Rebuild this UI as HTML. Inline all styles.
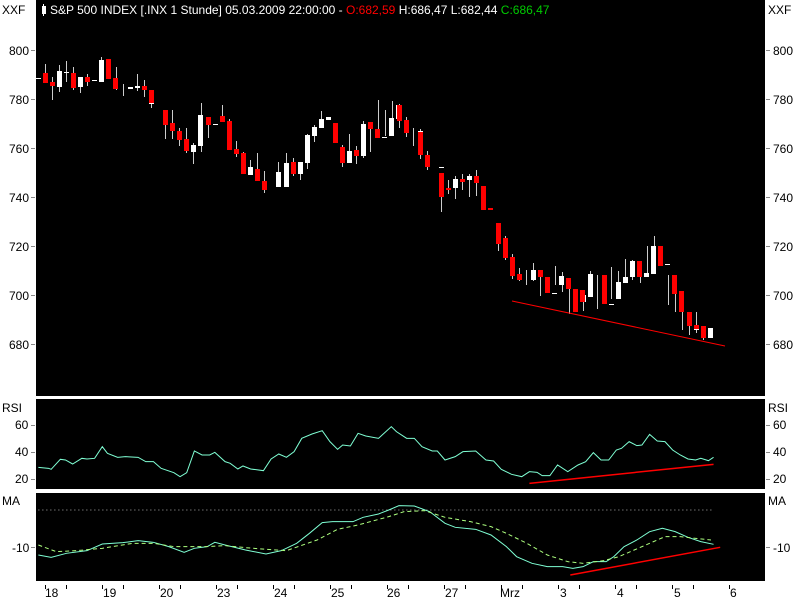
<!DOCTYPE html><html><head><style>
body{margin:0;background:#fff;width:800px;height:600px;overflow:hidden;font-family:"Liberation Sans",sans-serif}
svg{display:block}
text{font-family:"Liberation Sans",sans-serif;font-size:12px}
</style></head><body>
<svg width="800" height="600" xmlns="http://www.w3.org/2000/svg" shape-rendering="crispEdges">
<rect width="800" height="600" fill="#fff"/>
<rect x="36" y="0" width="729" height="396" fill="#000"/>
<rect x="36" y="399" width="729" height="90" fill="#000"/>
<rect x="36" y="493" width="729" height="88" fill="#000"/>
<g fill="#000">
<text x="2" y="14" font-size="11">XXF</text>
<text x="768" y="14" font-size="11">XXF</text>
<text x="9" y="55">800</text><text x="9" y="104">780</text><text x="9" y="153">760</text><text x="9" y="202">740</text><text x="9" y="251">720</text><text x="9" y="300">700</text><text x="9" y="349">680</text>
<text x="773" y="55">800</text><text x="773" y="104">780</text><text x="773" y="153">760</text><text x="773" y="202">740</text><text x="773" y="251">720</text><text x="773" y="300">700</text><text x="773" y="349">680</text>
<text x="2" y="412">RSI</text><text x="768" y="412">RSI</text>
<text x="15" y="429">60</text><text x="15" y="456">40</text><text x="15" y="483">20</text>
<text x="773" y="429">60</text><text x="773" y="456">40</text><text x="773" y="483">20</text>
<text x="2" y="505">MA</text><text x="768" y="505">MA</text>
<text x="12" y="552">-10</text><text x="773" y="552">-10</text>
<text x="45" y="597">18</text><text x="103" y="597">19</text><text x="160" y="597">20</text><text x="217" y="597">23</text><text x="274" y="597">24</text><text x="331" y="597">25</text><text x="387" y="597">26</text><text x="445" y="597">27</text><text x="500" y="597">Mrz</text><text x="560" y="597">3</text><text x="617" y="597">4</text><text x="674" y="597">5</text><text x="730" y="597">6</text>
</g>
<g fill="#888">
<rect x="31" y="50" width="4" height="1"/><rect x="31" y="99" width="4" height="1"/><rect x="31" y="148" width="4" height="1"/><rect x="31" y="197" width="4" height="1"/><rect x="31" y="246" width="4" height="1"/><rect x="31" y="295" width="4" height="1"/><rect x="31" y="344" width="4" height="1"/>
<rect x="766" y="50" width="4" height="1"/><rect x="766" y="99" width="4" height="1"/><rect x="766" y="148" width="4" height="1"/><rect x="766" y="197" width="4" height="1"/><rect x="766" y="246" width="4" height="1"/><rect x="766" y="295" width="4" height="1"/><rect x="766" y="344" width="4" height="1"/>
<rect x="31" y="425" width="4" height="1"/><rect x="31" y="452" width="4" height="1"/><rect x="31" y="479" width="4" height="1"/>
<rect x="766" y="425" width="4" height="1"/><rect x="766" y="452" width="4" height="1"/><rect x="766" y="479" width="4" height="1"/>
<rect x="31" y="547" width="4" height="1"/><rect x="766" y="547" width="4" height="1"/>
</g>
<g fill="#000">
<rect x="45" y="585" width="1" height="4"/><rect x="66" y="585" width="1" height="4"/><rect x="102" y="585" width="1" height="4"/><rect x="123" y="585" width="1" height="4"/><rect x="159" y="585" width="1" height="4"/><rect x="180" y="585" width="1" height="4"/><rect x="216" y="585" width="1" height="4"/><rect x="237" y="585" width="1" height="4"/><rect x="273" y="585" width="1" height="4"/><rect x="294" y="585" width="1" height="4"/><rect x="330" y="585" width="1" height="4"/><rect x="351" y="585" width="1" height="4"/><rect x="387" y="585" width="1" height="4"/><rect x="408" y="585" width="1" height="4"/><rect x="444" y="585" width="1" height="4"/><rect x="465" y="585" width="1" height="4"/><rect x="501" y="585" width="1" height="4"/><rect x="522" y="585" width="1" height="4"/><rect x="558" y="585" width="1" height="4"/><rect x="579" y="585" width="1" height="4"/><rect x="615" y="585" width="1" height="4"/><rect x="636" y="585" width="1" height="4"/><rect x="672" y="585" width="1" height="4"/><rect x="693" y="585" width="1" height="4"/><rect x="729" y="585" width="1" height="4"/>
</g>
<rect x="42" y="6" width="4" height="8" fill="#fff"/><rect x="43" y="4" width="1" height="12" fill="#fff"/>
<text x="50" y="14" font-size="11" fill="#fff">S&amp;P 500 INDEX [.INX  1 Stunde] 05.03.2009 22:00:00 - <tspan fill="#f00">O:682,59</tspan> H:686,47 L:682,44 <tspan fill="#0c0">C:686,47</tspan></text>
<g id="c">
<!-- wicks -->
<g fill="#ccc">
<rect x="45" y="64" width="1" height="19"/><rect x="52" y="77" width="1" height="23"/><rect x="59" y="65" width="1" height="27"/><rect x="66" y="61" width="1" height="21"/><rect x="73" y="67" width="1" height="23"/><rect x="80" y="77" width="1" height="16"/><rect x="87" y="74" width="1" height="12"/><rect x="101" y="57" width="1" height="25"/>
<rect x="116" y="67" width="1" height="23"/><rect x="123" y="84" width="1" height="12"/><rect x="137" y="74" width="1" height="17"/><rect x="144" y="80" width="1" height="17"/><rect x="151" y="90" width="1" height="18"/>
<rect x="165" y="110" width="1" height="29"/><rect x="172" y="110" width="1" height="29"/><rect x="179" y="128" width="1" height="18"/><rect x="186" y="128" width="1" height="25"/><rect x="193" y="143" width="1" height="21"/><rect x="201" y="103" width="1" height="49"/><rect x="208" y="117" width="1" height="21"/><rect x="222" y="105" width="1" height="17"/><rect x="229" y="119" width="1" height="31"/><rect x="236" y="141" width="1" height="16"/><rect x="243" y="152" width="1" height="22"/><rect x="250" y="160" width="1" height="15"/><rect x="257" y="153" width="1" height="28"/><rect x="264" y="171" width="1" height="22"/>
<rect x="278" y="162" width="1" height="25"/><rect x="286" y="153" width="1" height="34"/><rect x="293" y="158" width="1" height="18"/><rect x="300" y="162" width="1" height="18"/><rect x="307" y="134" width="1" height="35"/><rect x="314" y="125" width="1" height="17"/><rect x="321" y="111" width="1" height="17"/><rect x="335" y="123" width="1" height="20"/><rect x="342" y="145" width="1" height="22"/><rect x="349" y="134" width="1" height="29"/><rect x="356" y="146" width="1" height="18"/><rect x="363" y="121" width="1" height="37"/><rect x="370" y="122" width="1" height="30"/><rect x="378" y="100" width="1" height="38"/><rect x="385" y="110" width="1" height="26"/><rect x="392" y="101" width="1" height="22"/><rect x="399" y="104" width="1" height="24"/><rect x="406" y="117" width="1" height="20"/><rect x="413" y="128" width="1" height="18"/><rect x="420" y="129" width="1" height="30"/><rect x="427" y="151" width="1" height="19"/>
<rect x="441" y="173" width="1" height="39"/><rect x="448" y="180" width="1" height="14"/><rect x="455" y="176" width="1" height="23"/><rect x="462" y="174" width="1" height="16"/><rect x="469" y="174" width="1" height="23"/><rect x="476" y="170" width="1" height="26"/><rect x="484" y="186" width="1" height="24"/>
<rect x="498" y="223" width="1" height="28"/><rect x="505" y="236" width="1" height="24"/><rect x="512" y="254" width="1" height="25"/><rect x="519" y="268" width="1" height="13"/><rect x="526" y="270" width="1" height="15"/><rect x="533" y="263" width="1" height="18"/><rect x="540" y="277" width="1" height="19"/><rect x="555" y="266" width="1" height="19"/><rect x="562" y="272" width="1" height="20"/><rect x="569" y="286" width="1" height="28"/><rect x="583" y="293" width="1" height="18"/><rect x="590" y="271" width="1" height="26"/><rect x="597" y="275" width="1" height="34"/><rect x="611" y="267" width="1" height="32"/><rect x="618" y="271" width="1" height="25"/><rect x="625" y="259" width="1" height="18"/><rect x="632" y="260" width="1" height="20"/><rect x="640" y="266" width="1" height="17"/><rect x="647" y="246" width="1" height="30"/><rect x="654" y="236" width="1" height="30"/><rect x="668" y="275" width="1" height="30"/><rect x="675" y="285" width="1" height="27"/><rect x="682" y="307" width="1" height="23"/><rect x="689" y="318" width="1" height="17"/><rect x="696" y="312" width="1" height="21"/><rect x="703" y="326" width="1" height="14"/>
</g>
<g fill="#fff">
<rect x="36" y="78" width="5" height="1"/><rect x="57" y="71" width="5" height="16"/><rect x="64" y="72" width="5" height="1"/><rect x="78" y="77" width="5" height="10"/><rect x="92" y="80" width="5" height="1"/><rect x="99" y="60" width="5" height="22"/><rect x="128" y="87" width="5" height="2"/><rect x="135" y="86" width="5" height="2"/><rect x="149" y="103" width="5" height="1"/><rect x="191" y="145" width="5" height="7"/><rect x="198" y="115" width="5" height="31"/><rect x="213" y="124" width="5" height="1"/><rect x="248" y="167" width="5" height="8"/><rect x="262" y="189" width="5" height="1"/><rect x="276" y="172" width="5" height="15"/><rect x="284" y="163" width="5" height="24"/><rect x="298" y="162" width="5" height="12"/><rect x="305" y="135" width="5" height="28"/><rect x="312" y="127" width="5" height="9"/><rect x="319" y="119" width="5" height="9"/><rect x="326" y="117" width="5" height="3"/><rect x="347" y="151" width="5" height="12"/><rect x="361" y="124" width="5" height="32"/><rect x="382" y="137" width="5" height="1"/><rect x="389" y="118" width="5" height="18"/><rect x="396" y="105" width="5" height="14"/><rect x="418" y="131" width="5" height="1"/><rect x="439" y="167" width="5" height="1"/><rect x="453" y="179" width="5" height="9"/><rect x="467" y="176" width="5" height="4"/><rect x="531" y="270" width="5" height="10"/><rect x="552" y="293" width="5" height="1"/><rect x="559" y="276" width="5" height="9"/><rect x="581" y="295" width="5" height="7"/><rect x="588" y="274" width="5" height="23"/><rect x="609" y="304" width="5" height="1"/><rect x="616" y="282" width="5" height="17"/><rect x="623" y="277" width="5" height="6"/><rect x="630" y="261" width="5" height="16"/><rect x="644" y="273" width="5" height="4"/><rect x="651" y="246" width="5" height="28"/><rect x="665" y="264" width="5" height="1"/><rect x="694" y="325" width="5" height="5"/><rect x="708" y="328" width="5" height="10"/>
</g>
<g fill="#f00">
<rect x="43" y="73" width="5" height="10"/><rect x="50" y="82" width="5" height="4"/><rect x="71" y="73" width="5" height="15"/><rect x="85" y="77" width="5" height="5"/><rect x="106" y="59" width="5" height="20"/><rect x="113" y="78" width="5" height="11"/><rect x="142" y="86" width="5" height="4"/><rect x="149" y="90" width="5" height="13"/><rect x="163" y="110" width="5" height="15"/><rect x="170" y="123" width="5" height="8"/><rect x="177" y="131" width="5" height="9"/><rect x="184" y="139" width="5" height="12"/><rect x="206" y="117" width="5" height="8"/><rect x="220" y="116" width="5" height="6"/><rect x="227" y="121" width="5" height="29"/><rect x="234" y="149" width="5" height="5"/><rect x="241" y="153" width="5" height="21"/><rect x="255" y="169" width="5" height="12"/><rect x="262" y="181" width="5" height="9"/><rect x="291" y="162" width="5" height="12"/><rect x="333" y="123" width="5" height="20"/><rect x="340" y="147" width="5" height="16"/><rect x="354" y="150" width="5" height="6"/><rect x="368" y="122" width="5" height="7"/><rect x="375" y="129" width="5" height="9"/><rect x="397" y="105" width="5" height="16"/><rect x="404" y="120" width="5" height="13"/><rect x="418" y="132" width="5" height="23"/><rect x="425" y="155" width="5" height="12"/><rect x="439" y="173" width="5" height="24"/><rect x="446" y="188" width="5" height="2"/><rect x="460" y="179" width="5" height="3"/><rect x="474" y="176" width="5" height="7"/><rect x="481" y="186" width="5" height="24"/><rect x="488" y="208" width="5" height="2"/><rect x="496" y="223" width="5" height="21"/><rect x="503" y="238" width="5" height="20"/><rect x="510" y="257" width="5" height="19"/><rect x="517" y="274" width="5" height="6"/><rect x="538" y="270" width="5" height="7"/><rect x="545" y="277" width="5" height="16"/><rect x="566" y="278" width="5" height="11"/><rect x="573" y="289" width="5" height="23"/><rect x="580" y="290" width="5" height="12"/><rect x="602" y="275" width="5" height="29"/><rect x="637" y="261" width="5" height="16"/><rect x="658" y="246" width="5" height="20"/><rect x="672" y="275" width="5" height="19"/><rect x="679" y="291" width="5" height="21"/><rect x="687" y="312" width="5" height="14"/><rect x="694" y="325" width="5" height="4"/><rect x="701" y="326" width="5" height="12"/>
</g>
</g>
<line x1="512" y1="301" x2="725" y2="346" stroke="#f00" stroke-width="1" shape-rendering="auto"/>
<g transform="translate(0,380) scale(0.5115,0.3333)" fill="none" shape-rendering="auto">
<polyline vector-effect="non-scaling-stroke" stroke="#7fffd4" stroke-width="1" points="75,262 95,265 100,268 118,238 128,240 142,252 160,235 170,237 185,235 200,200 210,220 230,232 245,230 270,232 285,245 300,245 315,265 340,278 352,290 365,278 380,213 395,225 410,225 420,217 440,245 450,250 465,267 475,258 490,267 515,272 530,237 545,222 560,232 575,215 590,175 610,162 630,152 645,185 660,208 670,195 685,198 700,160 715,168 740,175 765,140 775,155 795,175 810,175 825,200 845,213 855,213 870,240 890,230 905,215 930,213 950,240 965,243 980,268 1000,283 1020,290 1035,275 1050,277 1060,287 1075,287 1090,255 1110,275 1130,255 1145,245 1160,218 1175,240 1190,240 1205,210 1215,205 1230,185 1245,197 1255,195 1270,163 1285,183 1300,185 1315,210 1330,225 1345,237 1360,240 1370,235 1385,242 1395,232"/>
<line vector-effect="non-scaling-stroke" x1="1035" y1="310" x2="1395" y2="253" stroke="#f00" stroke-width="1.5"/>
<line vector-effect="non-scaling-stroke" x1="75" y1="390" x2="1395" y2="390" stroke="#aaa" stroke-width="1" stroke-dasharray="1 3"/>
<polyline vector-effect="non-scaling-stroke" stroke="#7fffd4" stroke-width="1" points="75,525 100,532 130,520 170,512 200,492 240,488 270,482 300,487 330,500 360,517 380,505 405,500 420,487 440,495 480,510 520,522 550,512 580,490 605,460 630,428 650,425 690,425 710,412 740,402 760,390 780,377 810,378 840,395 870,430 890,442 930,448 960,465 990,500 1010,530 1040,550 1070,560 1100,560 1120,565 1140,560 1160,545 1185,545 1200,530 1220,500 1245,480 1270,455 1295,445 1320,455 1345,472 1370,485 1395,493"/>
<polyline vector-effect="non-scaling-stroke" stroke="#adff7f" stroke-width="1" stroke-dasharray="4 3" points="75,495 110,515 150,512 200,505 260,490 300,490 340,500 400,500 440,497 480,503 520,508 560,512 620,480 660,448 700,435 760,410 790,395 830,392 870,412 920,425 960,440 990,460 1030,490 1070,525 1110,545 1140,550 1180,542 1210,530 1240,510 1270,490 1300,470 1330,470 1360,475 1390,480"/>
<line vector-effect="non-scaling-stroke" x1="1115" y1="585" x2="1408" y2="502" stroke="#f00" stroke-width="1.5"/>
</g>
</svg>
</body></html>
